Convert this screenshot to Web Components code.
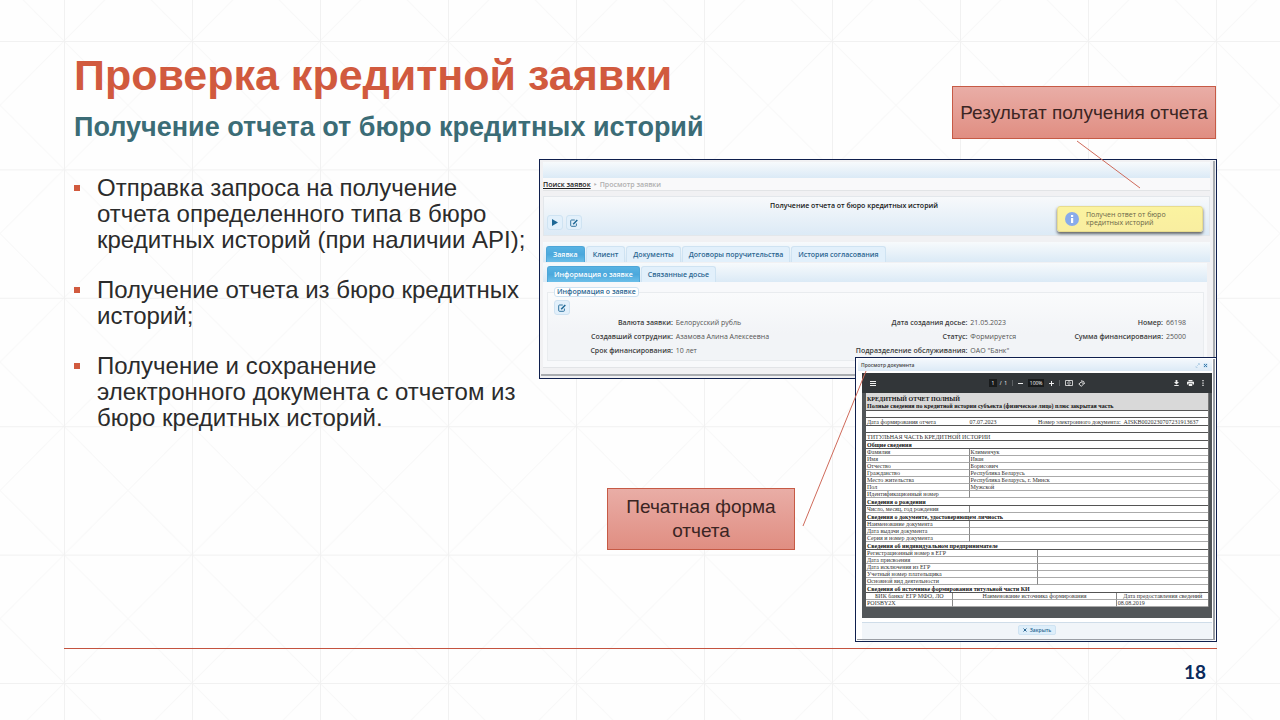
<!DOCTYPE html>
<html lang="ru">
<head>
<meta charset="utf-8">
<meta name="viewport" content="width=device-width, initial-scale=1">
<title>Проверка кредитной заявки</title>
<style>
  body { margin: 0; background: #fefefe; font-family: "Liberation Sans", Arial, sans-serif; color: #2b2b2b; }
</style>
</head>
<body>
<slide-page></slide-page>

<template id="slide-page">
  <style>
    :host { display: flex; flex-direction: column; position: relative; min-height: 100vh; box-sizing: border-box; padding: 0 63px 0 64px; overflow: hidden; }
    .mesh { position: absolute; inset: 0; width: 100%; height: 100%; z-index: -1; }
    header { display: flex; justify-content: space-between; align-items: flex-end; padding: 0 1px 8px 10px; height: 159px; box-sizing: border-box; }
    h1 { margin: 0; font-size: 43px; line-height: 56px; color: #d15a3e; }
    h2 { margin: 0; font-size: 27px; line-height: 48px; color: #3b6c76; }
    header note-callout { width: 264px; margin-bottom: 12px; }
    main { display: grid; grid-template-columns: 475fr 678fr; flex: 1; }
    ul { list-style: none; margin: 0; padding: 16px 0 0 10px; font-size: 24px; line-height: 26px; white-space: nowrap; }
    li { position: relative; padding-left: 23px; margin-bottom: 24px; }
    li::before { content: ""; position: absolute; left: 0; top: 10px; width: 6px; height: 6px; background: #d15a3e; }
    .figure { display: grid; position: relative; grid-template-columns: 1fr 362px; grid-template-rows: 198px 22px auto; align-content: start; }
    app-window { grid-area: 1 / 1 / 3 / 3; }
    doc-window { grid-area: 2 / 2 / 4 / 3; }
    .figure note-callout { grid-area: 3 / 1; width: 188px; justify-self: end; align-self: start; margin: 109px 60px 0 0; }
    .leaders { position: absolute; right: 0; top: -22px; width: 678px; height: 420px; pointer-events: none; }
    footer { border-top: 1px solid #c4533f; height: 72px; box-sizing: border-box; display: flex; justify-content: flex-end; align-items: flex-start; padding: 11px 11px 0 0; font: bold 19px/24px Lato, sans-serif; color: #0b2a5c; }
  </style>
  <svg class="mesh" aria-hidden="true">
    <defs><pattern id="cell" x="64" y="41" width="128" height="128.4" patternUnits="userSpaceOnUse">
      <path d="M0 0L128 128.4M128 0L0 128.4" stroke="#f8f8f8" fill="none"/>
      <path d="M.5 0V128.4M0 .5H128" stroke="#f1f1f1" fill="none"/>
    </pattern></defs>
    <rect width="100%" height="100%" fill="url(#cell)"/>
  </svg>
  <header>
    <div><h1>Проверка кредитной заявки</h1><h2>Получение отчета от бюро кредитных историй</h2></div>
    <note-callout>Результат получения отчета</note-callout>
  </header>
  <main>
    <ul>
      <li>Отправка запроса на получение<br>отчета определенного типа в бюро<br>кредитных историй (при наличии API);</li>
      <li>Получение отчета из бюро кредитных<br>историй;</li>
      <li>Получение и сохранение<br>электронного документа с отчетом из<br>бюро кредитных историй.</li>
    </ul>
    <div class="figure">
      <app-window></app-window>
      <doc-window></doc-window>
      <note-callout style="--pad: 6px">Печатная форма<br>отчета</note-callout>
      <svg class="leaders" viewBox="0 0 678 420" aria-hidden="true">
        <path d="M538 4L601 51M264 389L327 234" stroke="#cf6a5a" fill="none"/>
      </svg>
    </div>
  </main>
  <footer>18</footer>
</template>

<template id="note-callout">
  <style>
    :host { display: block; box-sizing: border-box; border: 1px solid #c65a45; background: linear-gradient(#e9ada6, #e08e82); padding: var(--pad, 14px 0 13px); text-align: center; font-size: 19px; line-height: 24px; color: #3b2523; white-space: nowrap; }
    :host([hidden]) { display: none; }
  </style>
  <slot></slot>
</template>

<template id="app-window">
  <style>
    :host { display: block; position: relative; box-sizing: border-box; height: 220px; border: 1px solid #0f1f4d; background: #f1f1f3; padding: 2px 6px 0 3px; font: 7px/10px "Open Sans", sans-serif; color: #555; overflow: hidden; }
    button { font: inherit; padding: 0; margin: 0; border: 1px solid #cfe3f2; background: #e2f0fb; color: #2a6590; }
    .top { height: 16px; background: linear-gradient(#f7fafc, #dbeaf6); }
    .crumbs { display: flex; gap: 3px; height: 12px; background: #f9f9fa; border-bottom: 1px solid #e2e4e6; line-height: 13px; color: #b0b0b0; font-weight: 600; }
    .crumbs a { color: #222; }
    .panel { margin-top: 5px; height: 40px; box-sizing: border-box; border: 1px solid #e3e7eb; background: linear-gradient(#f7f9fb, #dceaf6); padding: 3px; text-align: center; }
    .panel h3 { margin: 0; padding-right: 45px; font-size: 7px; font-weight: 600; line-height: 11px; color: #151515; }
    .tools { display: flex; gap: 3px; padding-top: 4px; }
    .icon { width: 16px; height: 15px; border-radius: 3px; display: grid; place-items: center; }
    svg { display: block; }
    .strip { display: flex; align-items: flex-end; gap: 1px; height: 20px; background: linear-gradient(#f7fafc, #dbeaf6); padding-left: 3px; margin-top: 6px; }
    .strip.inner { height: 19px; margin-top: 1px; padding-left: 4px; margin-right: 3px; }
    .strip button { height: 16px; padding: 0 6px; border-bottom: 0; border-radius: 3px 3px 0 0; font-weight: 600; line-height: 14px; white-space: nowrap; }
    .strip button[aria-selected=true] { color: #fff; border-color: #4da6d8; background: linear-gradient(#58b3e3, #4ba8dc 50%, #6cbfe9); }
    .body { height: 86px; background: #f8f9fb; margin-right: 3px; padding: 5px 0 0 4px; box-sizing: border-box; border-bottom: 1px solid #e2e4e7; }
    fieldset { margin: 0 3px 0 0; padding: 0 0 0 6px; border: 1px solid #e9ecef; background: linear-gradient(#fafbfc, #f2f4f7 60%); height: 74px; box-sizing: border-box; }
    legend { font-weight: 600; color: #2a6590; background: #fff; border: 1px solid #cfe3f2; border-radius: 3px; padding: 0 2px; line-height: 8px; }
    dl { display: grid; grid-template-columns: 119fr 171fr 118fr 100fr 90fr 37fr; column-gap: 3px; margin: 1px 0 0; line-height: 14px; white-space: nowrap; }
    dt { min-width: 0; text-align: right; font-weight: 600; color: #3c3c3c; }
    dd { margin: 0; min-width: 0; }
    .edge { position: absolute; inset: 1px 1px 2px 1px; border: solid #a9acb0; border-width: 0 2px 2px 0; pointer-events: none; }
    .toast { position: absolute; right: 13px; top: 46px; width: 146px; height: 26px; box-sizing: border-box; display: flex; align-items: center; gap: 7px; padding-left: 7px; background: linear-gradient(#fbf3a0, #f9eea0); border: 1px solid #e8dc8d; border-radius: 3px; box-shadow: 0 2px 3px #666; line-height: 8px; color: #6a6648; }
  </style>
  <div class="top"></div>
  <nav class="crumbs"><a href="#search">Поиск заявок</a><span>‣</span><span>Просмотр заявки</span></nav>
  <section class="panel">
    <h3>Получение отчета от бюро кредитных историй</h3>
    <div class="tools">
      <button class="icon" aria-label="Запустить"><svg width="6" height="7"><path d="M0 0L6 3.500L0 7z" fill="#1d6795"/></svg></button>
      <button class="icon" aria-label="Изменить"><edit-icon></edit-icon></button>
    </div>
  </section>
  <div class="strip" role="tablist">
    <button role="tab" aria-selected="true">Заявка</button>
    <button role="tab">Клиент</button>
    <button role="tab">Документы</button>
    <button role="tab">Договоры поручительства</button>
    <button role="tab">История согласования</button>
  </div>
  <div class="strip inner" role="tablist">
    <button role="tab" aria-selected="true">Информация о заявке</button>
    <button role="tab">Связанные досье</button>
  </div>
  <div class="body">
    <fieldset>
      <legend>Информация о заявке</legend>
      <button class="icon" style="margin-top:3px" aria-label="Изменить"><edit-icon></edit-icon></button>
      <dl>
        <dt>Валюта заявки:</dt><dd>Белорусский рубль</dd><dt>Дата создания досье:</dt><dd>21.05.2023</dd><dt>Номер:</dt><dd>66198</dd>
        <dt>Создавший сотрудник:</dt><dd>Азамова Алина Алексеевна</dd><dt>Статус:</dt><dd>Формируется</dd><dt>Сумма финансирования:</dt><dd>25000</dd>
        <dt>Срок финансирования:</dt><dd>10 лет</dd><dt>Подразделение обслуживания:</dt><dd>ОАО "Банк"</dd>
      </dl>
    </fieldset>
  </div>
  <div class="edge"></div>
  <div class="toast" role="status">
    <svg width="14" height="14" viewBox="0 0 14 14" aria-hidden="true"><circle cx="7" cy="7" r="7" fill="#89abea"/><path d="M6 3h2.200v2H6zM6 6h2.200v5H6z" fill="#fff"/></svg>
    <span>Получен ответ от бюро<br>кредитных историй</span>
  </div>
</template>

<template id="edit-icon">
  <style>:host { display: block; } svg { display: block; }</style>
  <svg width="8" height="8" viewBox="0 0 8 8" fill="none" stroke="#1d6795" aria-hidden="true"><path d="M4.800 1H1.500Q.7 1 .7 1.800V6.500Q.7 7.300 1.500 7.300H5.600Q6.400 7.300 6.400 6.500V4.500" stroke-width=".9"/><path d="M3.200 5.200L7.300 1" stroke-width="1.500"/></svg>
</template>

<template id="doc-window">
  <style>
    :host { display: block; position: relative; box-sizing: border-box; height: 285px; border: 1px solid #0f1f4d; background: #fff; padding: 1px 4px 0 2px; font: 5px/12px "Open Sans", sans-serif; }
    .edge { position: absolute; inset: 1px; border: solid #9a9ea4; border-width: 0 2px 1px 0; pointer-events: none; }
    .title { display: flex; justify-content: space-between; align-items: center; height: 12px; padding: 0 3px; background: linear-gradient(#f4f8fc, #dceaf6); font-weight: 600; color: #444; }
    .viewer { margin: 2px 0 0 4px; background: #525659; height: 245px; }
    .bar { display: grid; grid-template-columns: 1fr auto 1fr; align-items: center; height: 20px; padding: 0 8px; background: #323639; color: #fff; }
    .bar svg { display: block; fill: none; stroke: #eee; }
    .mid, .end { display: flex; align-items: center; gap: 8px; }
    .mid { gap: 5px; }
    .end { justify-content: flex-end; }
    .bar button { display: block; padding: 0; border: 0; background: none; }
    input { box-sizing: border-box; width: 8px; height: 8px; margin: 0; padding: 0; border: 0; background: #191b1c; color: #fff; font: inherit; line-height: 8px; text-align: center; }
    input.zoom { width: 16px; }
    .sep { width: 1px; height: 6px; background: #5c6063; }
    table { width: calc(100% - 7px); margin-left: 4px; border-spacing: 0; table-layout: fixed; background: #fff; font: 6px/6px "Liberation Serif", serif; color: #333; border-right: 1px solid #777; }
    th, td { padding: 0 0 0 1px; height: 6px; border-bottom: 1px solid #aaa; text-align: left; font-weight: normal; white-space: nowrap; overflow: visible; }
    td + td, .cols th + th { border-left: 1px solid #888; }
    .plain td { border-left: 0; }
    .sec th, .sec td { font-weight: bold; height: 7px; border-color: #555; color: #111; }
    .plain th, .plain td { border-color: #555; }
    .tall > * { height: 7px; }
    .head th { background: #d9d9d9; font-weight: bold; line-height: 7px; padding-top: 1px; vertical-align: bottom; color: #111; border-color: #555; }
    .head div { height: 16px; display: flex; flex-direction: column; justify-content: flex-end; }
    .cols th { text-align: center; }
    .foot { margin: 4px 0 0 4px; height: 18px; border-top: 1px solid #cfdde9; background: #f1f5f9; display: flex; justify-content: center; align-items: flex-start; }
    .foot button { display: flex; align-items: center; gap: 3px; height: 10px; margin-top: 2px; padding: 0 4px; border: 1px solid #cfe3f2; border-radius: 2px; background: #ddeefa; color: #2a6590; font: 600 5px/8px "Open Sans", sans-serif; }
  </style>
  <div class="title"><span>Просмотр документа</span>
    <svg width="14" height="5" fill="none" aria-hidden="true"><path d="M1 3v1.500h1.500M2 3l2-2M3 .5h1.500V2" stroke="#a9c9e2" stroke-width=".7"/><rect x="8.500" y=".5" width="4" height="4" fill="#c2dcf0"/><path d="M9 1l3 3M12 1L9 4" stroke="#3d7caa"/></svg>
  </div>
  <div class="viewer">
    <div class="bar">
      <div><button aria-label="Меню"><svg width="6" height="5"><path d="M0 .5h6M0 2.500h6M0 4.500h6"/></svg></button></div>
      <div class="mid">
        <label style="display:flex;gap:3px"><input value="1" aria-label="Страница"><span style="line-height:8px">/&nbsp; 1</span></label><i class="sep"></i>
        <button aria-label="Уменьшить"><svg width="5" height="5"><path d="M0 2.500h5"/></svg></button>
        <input class="zoom" value="100%" aria-label="Масштаб">
        <button aria-label="Увеличить"><svg width="5" height="5"><path d="M0 2.500h5M2.500 0v5"/></svg></button><i class="sep"></i>
        <button aria-label="По странице"><svg width="8" height="6"><path d="M.5 .5h7v5h-7zM4 0v6M2 3h1M5 3h1" stroke-width=".8"/></svg></button>
        <button aria-label="Повернуть"><svg width="7" height="7"><path d="M3.200 2L5.700 4L3.200 6.300L.8 4zM3 .8Q6.500 .5 6.500 4" stroke-width=".9"/></svg></button>
      </div>
      <div class="end">
        <button aria-label="Скачать"><svg width="5" height="6"><path d="M.3 5.500h4.400"/><path d="M1.600 0h1.800v2H5L2.500 4.500L0 2h1.600z" fill="#eee" stroke="none"/></svg></button>
        <button aria-label="Печать"><svg width="7" height="6"><path d="M1.500 0h4v1.200h-4zM0 1.700h7v2.800H5.700V3.500H1.300v1H0zM1.800 4h3.400v2H1.800z" fill="#eee" stroke="none"/></svg></button>
        <button aria-label="Ещё"><svg width="2" height="6"><path d="M1 0v1.300M1 2.400v1.300M1 4.700V6" stroke-width="1.300"/></svg></button>
      </div>
    </div>
    <table>
      <colgroup><col style="width:25%"><col style="width:5%"><col style="width:20%"><col style="width:23%"><col style="width:27%"></colgroup>
      <tbody></tbody>
    </table>
  </div>
  <div class="foot"><button><svg width="4" height="4" aria-hidden="true"><path d="M.5 .5l3 3M3.500 .5l-3 3" stroke="#2a6590"/></svg>Закрыть</button></div>
  <div class="edge"></div>
</template>

<script>
  class TemplateElement extends HTMLElement {
    constructor() {
      super();
      this.attachShadow({ mode: "open" })
        .append(document.getElementById(this.localName).content.cloneNode(true));
    }
  }

  class DocWindow extends TemplateElement {
    constructor() {
      super();
      const body = this.shadowRoot.querySelector("tbody");
      const row = (cls, cells, tag = "td") => {
        const tr = document.createElement("tr");
        tr.className = cls;
        for (const [text, span] of cells) {
          const cell = document.createElement(tag);
          cell.colSpan = span;
          cell.innerHTML = text;
          tr.append(cell);
        }
        body.append(tr);
      };
      const section = text => row("sec", [[text, 5]], "th");
      const field = (name, value = "", span = 2) => row("", [[name, span], [value, 5 - span]]);

      row("head", [["<div><span>КРЕДИТНЫЙ ОТЧЕТ ПОЛНЫЙ</span><span>Полные сведения по кредитной истории субъекта (физическое лицо) плюс закрытая часть</span></div>", 5]], "th");
      row("plain", [["", 5]]);
      row("plain tall", [["Дата формирования отчета", 2], ["07.07.2023", 1], ["Номер электронного документа:&nbsp; AISKB0020230707231913637", 2]]);
      row("plain", [["", 5]]);
      row("plain tall", [["ТИТУЛЬНАЯ ЧАСТЬ КРЕДИТНОЙ ИСТОРИИ", 5]]);
      section("Общие сведения");
      field("Фамилия", "Клименчук");
      field("Имя", "Иван");
      field("Отчество", "Борисович");
      field("Гражданство", "Республика Беларусь");
      field("Место жительства", "Республика Беларусь, г. Минск");
      field("Пол", "Мужской");
      field("Идентификационный номер");
      section("Сведения о рождении");
      field("Число, месяц, год рождения");
      section("Сведения о документе, удостоверяющем личность");
      field("Наименование документа");
      field("Дата выдачи документа");
      field("Серия и номер документа");
      section("Сведения об индивидуальном предпринимателе");
      field("Регистрационный номер в ЕГР", "", 3);
      field("Дата присвоения", "", 3);
      field("Дата исключения из ЕГР", "", 3);
      field("Учетный номер плательщика", "", 3);
      field("Основной вид деятельности", "", 3);
      section("Сведения об источнике формирования титульной части КИ");
      row("cols", [["БИК банка/ ЕГР МФО, ЛО", 1], ["Наименование источника формирования", 3], ["Дата предоставления сведений", 1]], "th");
      row("", [["POISBY2X", 1], ["", 3], ["08.08.2019", 1]]);
    }
  }

  customElements.define("edit-icon", class extends TemplateElement {});
  customElements.define("note-callout", class extends TemplateElement {});
  customElements.define("app-window", class extends TemplateElement {});
  customElements.define("doc-window", DocWindow);
  customElements.define("slide-page", class extends TemplateElement {});
</script>
</body>
</html>
